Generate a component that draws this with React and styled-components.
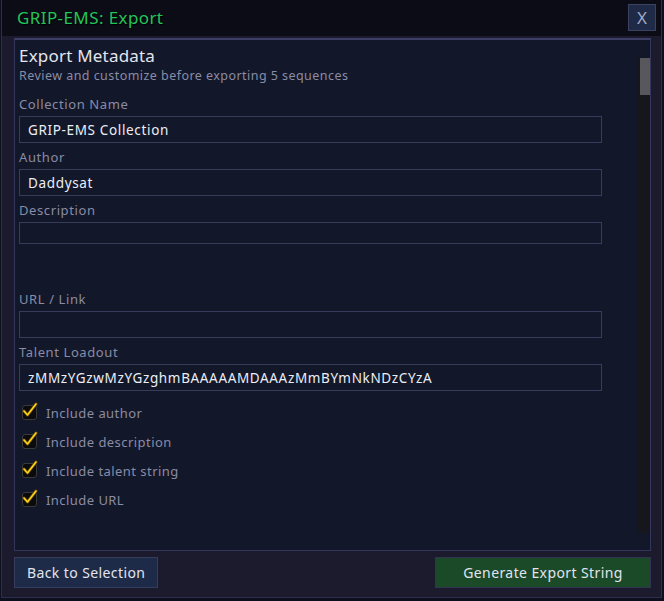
import React from 'react'
import styled, { createGlobalStyle } from 'styled-components'

const GlobalStyle = createGlobalStyle`
  html, body {
    margin: 0;
    padding: 0;
    background: #0e1020;
  }
  body {
    font-family: "Noto Sans", "Open Sans", sans-serif;
  }
`

const fields = [
  { label: 'Collection Name', value: 'GRIP-EMS Collection' },
  { label: 'Author', value: 'Daddysat' },
  { label: 'Description', value: '', short: true, spaceAfter: true },
  { label: 'URL / Link', value: '' },
  { label: 'Talent Loadout', value: 'zMMzYGzwMzYGzghmBAAAAAMDAAAzMmBYmNkNDzCYzA' },
]

const options = ['Include author', 'Include description', 'Include talent string', 'Include URL']

function Check() {
  return (
    <CheckBox>
      <svg width="18" height="16" viewBox="0 0 18 16">
        <path d="M3 9 L6.5 13 L15 2" fill="none" stroke="#5e4700" strokeWidth="3" strokeLinecap="round" strokeLinejoin="round" />
        <path d="M3 9 L6.5 13 L15 2" fill="none" stroke="#ffd41c" strokeWidth="1.6" strokeLinecap="round" strokeLinejoin="round" />
      </svg>
    </CheckBox>
  )
}

function App() {
  return (
    <>
      <GlobalStyle />
      <Window>
        <TitleBar>
          <Title>GRIP-EMS: Export</Title>
          <CloseButton>X</CloseButton>
        </TitleBar>
        <Body>
          <Panel>
            <Heading>Export Metadata</Heading>
            <Subtitle>Review and customize before exporting 5 sequences</Subtitle>
            {fields.map((f) => (
              <Field key={f.label} $spaceAfter={f.spaceAfter}>
                <Label>{f.label}</Label>
                <Input $short={f.short}>{f.value}</Input>
              </Field>
            ))}
            <Options>
              {options.map((o) => (
                <Option key={o}>
                  <Check />
                  <OptionText>{o}</OptionText>
                </Option>
              ))}
            </Options>
            <ScrollTrack>
              <ScrollThumb />
            </ScrollTrack>
          </Panel>
          <Footer>
            <Button>Back to Selection</Button>
            <Button $primary>Generate Export String</Button>
          </Footer>
        </Body>
      </Window>
    </>
  )
}

export default App

const Window = styled.div`
  width: 659px;
  height: 597px;
  margin-left: 1px;
  border: 1px solid #2e2f4e;
  border-top: none;
  background: #1b1b2d;
  display: flex;
  flex-direction: column;
`
const TitleBar = styled.div`
  height: 36px;
  background: #0c0c17;
  display: flex;
  align-items: center;
  justify-content: space-between;
  padding: 0 5px 0 15px;
  box-sizing: border-box;
`
const Title = styled.div`
  color: #22c55a;
  font-size: 17px;
  letter-spacing: 0.4px;
  text-shadow: 1px 1px 1px #000;
  margin-top: -1px;
`
const CloseButton = styled.div`
  width: 28px;
  height: 27px;
  box-sizing: border-box;
  background: #1f2a47;
  border: 1px solid #3b4262;
  color: #a3a8c6;
  font-size: 17px;
  display: flex;
  align-items: center;
  justify-content: center;
  margin-top: -1px;
`
const Body = styled.div`
  flex: 1;
  display: flex;
  flex-direction: column;
  padding: 2px 10px 7px 12px;
`
const Panel = styled.div`
  position: relative;
  height: 513px;
  box-sizing: border-box;
  border: 1px solid #34355a;
  border-top: 2px solid #3d3e66;
  background: #121829;
  padding: 5px 48px 0 4px;
`
const Heading = styled.div`
  color: #e4e4ee;
  font-size: 17px;
  line-height: 22px;
  letter-spacing: 0.2px;
`
const Subtitle = styled.div`
  color: #8a8ba6;
  font-size: 12.5px;
  line-height: 17px;
  letter-spacing: 0.45px;
  margin-bottom: 6px;
`
const Field = styled.div`
  display: flex;
  flex-direction: column;
  margin-bottom: ${(p) => (p.$spaceAfter ? '41px' : '0')};
`
const Label = styled.div`
  color: #8a8ba6;
  font-size: 13px;
  line-height: 16px;
  letter-spacing: 0.6px;
  margin: 6px 0 4px;
`
const Input = styled.div`
  height: ${(p) => (p.$short ? '22px' : '27px')};
  box-sizing: border-box;
  border: 1px solid #383b5c;
  background: #121829;
  color: #eceef6;
  font-size: 13.5px;
  letter-spacing: 0.65px;
  padding: 0 8px;
  display: flex;
  align-items: center;
`
const Options = styled.div`
  display: flex;
  flex-direction: column;
  gap: 10px;
  margin-top: 12px;
  padding-left: 3px;
`
const Option = styled.div`
  display: flex;
  align-items: center;
  gap: 9px;
  height: 19px;
`
const CheckBox = styled.div`
  position: relative;
  width: 13px;
  height: 13px;
  border: 1px solid #3a3a3a;
  border-radius: 3px;
  background: #0b0b0e;

  svg {
    position: absolute;
    left: -2px;
    top: -4px;
  }
`
const OptionText = styled.div`
  color: #8a8ba6;
  font-size: 13px;
  letter-spacing: 0.45px;
`
const ScrollTrack = styled.div`
  position: absolute;
  top: 18px;
  right: 0;
  width: 13px;
  height: 475px;
  background: #15171d;
  display: flex;
  justify-content: center;
`
const ScrollThumb = styled.div`
  width: 10px;
  height: 37px;
  background: #58585c;
  margin-left: 2px;
`
const Footer = styled.div`
  display: flex;
  justify-content: space-between;
  margin-top: 6px;
`
const Button = styled.div`
  height: 31px;
  box-sizing: border-box;
  padding: 0 12px;
  min-width: ${(p) => (p.$primary ? '216px' : '144px')};
  background: ${(p) => (p.$primary ? '#1b4a29' : '#1e2b48')};
  border: 1px solid ${(p) => (p.$primary ? '#30344f' : '#363d5c')};
  color: #e2e4ee;
  font-size: 14px;
  letter-spacing: 0.4px;
  display: flex;
  align-items: center;
  justify-content: center;
`
